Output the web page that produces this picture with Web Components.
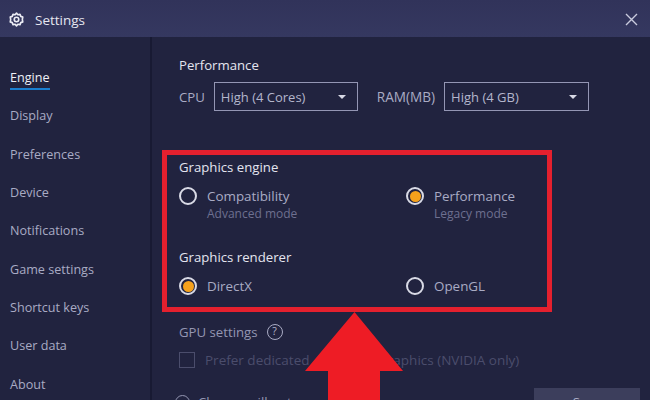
<!DOCTYPE html>
<html><head><meta charset="utf-8">
<style>
html,body{margin:0;padding:0;background:#21233f;overflow:hidden}
body{width:650px;height:400px;font-family:"Open Sans","Noto Sans",sans-serif}
</style></head><body>
<settings-window></settings-window>
<script>
const FONT='"Open Sans","Noto Sans",sans-serif';
class TitleBar extends HTMLElement{constructor(){super();this.attachShadow({mode:'open'}).innerHTML=`<style>
:host{display:flex;align-items:center;height:37px;box-sizing:border-box;padding:2px 12px 0 9px;background:linear-gradient(#31335a,#353860);color:#e6e7f0;font-size:13.5px}
svg{display:block}
.t{margin-left:11px;flex:1}
</style>
<svg width="15" height="15" viewBox="0 0 24 24" fill="none" stroke="#eceDf5" stroke-width="2.6" stroke-linejoin="round"><path d="M12 1.8l2.2 2.6 3.4-.6 1.2 3.2 3.2 1.2-.6 3.4 0 .8.6 3.4-3.2 1.2-1.2 3.2-3.4-.6L12 22.2l-2.2-2.6-3.4.6-1.2-3.2-3.2-1.2.6-3.4 0-.8-.6-3.4 3.2-1.2 1.2-3.2 3.4.6z"/><circle cx="12" cy="12" r="3.6"/></svg>
<span class="t">Settings</span>
<svg width="13" height="13" viewBox="0 0 13 13" stroke="#c9cbdd" stroke-width="1.4"><path d="M1 1l11 11M12 1L1 12"/></svg>`}}
customElements.define('title-bar',TitleBar);

class NavItem extends HTMLElement{constructor(){super();this.attachShadow({mode:'open'}).innerHTML=`<style>
:host{display:block;height:38.35px;font-size:12.6px;color:#a9abc4;line-height:18px}
:host([active]){color:#eeeff6}
span{display:inline-block;height:21px;box-sizing:border-box}
:host([active]) span{border-bottom:2px solid #1a7fd0}
</style><span><slot></slot></span>`}}
customElements.define('nav-item',NavItem);

class SideNav extends HTMLElement{constructor(){super();this.attachShadow({mode:'open'}).innerHTML=`<style>
:host{display:block;width:152px;flex:none;box-sizing:border-box;padding:32px 0 0 10px;border-right:2px solid #181a33;background:#21233f}
</style><slot></slot>`}}
customElements.define('side-nav',SideNav);

class SelectBox extends HTMLElement{constructor(){super();this.attachShadow({mode:'open'}).innerHTML=`<style>
:host{display:flex;align-items:center;height:29px;box-sizing:border-box;border:1px solid #9496b4;padding:0 11px 0 6px;color:#b4b6cc;font-size:13px}
span{flex:1}
i{border:4px solid transparent;border-top:4px solid #d8d9e6;border-bottom:0;display:block}
</style><span><slot></slot></span><i></i>`}}
customElements.define('select-box',SelectBox);

class RadioOption extends HTMLElement{constructor(){super();this.attachShadow({mode:'open'}).innerHTML=`<style>
:host{display:grid;grid-template-columns:18px 1fr;column-gap:10px;align-items:center;color:#a9abc4;font-size:13.4px;line-height:18px}
.r{width:18px;height:18px;box-sizing:border-box;border:2px solid #d9dae6;border-radius:50%;display:flex;align-items:center;justify-content:center}
:host([checked]) .r::after{content:"";width:11px;height:11px;border-radius:50%;background:#f5a11c}
.s{grid-column:2;font-size:12px;color:#6e7090;line-height:16px;margin-top:1px}
.s:empty{display:none}
</style><div class="r"></div><div><slot></slot></div><div class="s"></div>`;}
connectedCallback(){this.shadowRoot.querySelector('.s').textContent=this.getAttribute('sub')||''}}
customElements.define('radio-option',RadioOption);

class SettingsPane extends HTMLElement{constructor(){super();this.attachShadow({mode:'open'}).innerHTML=`<style>
:host{display:block;flex:1;position:relative;padding:19px 0 0 27px;font-size:13.2px;color:#a9abc4;overflow:hidden}
.h{color:#e4e5ef;line-height:18px;height:18px}
.row{display:flex;align-items:center;margin-top:8px;height:29px}
.l1{margin-right:9px}
.l2{margin:0 9px 0 19px;font-size:13.6px}
.cpu{width:144px}.ram{width:145px}
.g{display:grid;grid-template-columns:227px 180px}
.gfx{margin-top:47px}
.gfx .h{margin-bottom:11px}
.r2{margin-top:26px}
.gpu{margin-top:28px;display:flex;align-items:center;height:18px;color:#9496b2}
.q{width:16px;height:16px;box-sizing:border-box;border:1.5px solid #a9abc4;border-radius:50%;margin-left:9px;font-size:10.5px;line-height:13px;text-align:center;color:#b4b6cc}
.chk{display:flex;align-items:center;margin-top:10px;color:#4b4d6c;height:18px;font-size:13.5px;white-space:pre}
.chk i{width:16px;height:16px;box-sizing:border-box;border:1.5px solid #4b4d6c;margin:0 10px 0 0;display:block}
.chk b{font-weight:400;margin-left:71px}
.last{display:flex;align-items:center;margin:24px 0 0 -4px;color:#9496b2;height:18px}
.last i{width:15px;height:15px;box-sizing:border-box;border:1.5px solid #9496b2;border-radius:50%;margin-right:8px}
.save{position:absolute;left:382px;top:351px;width:106px;height:34px;background:#3c3e5c;color:#a9abc4;text-align:center;line-height:28px}
.box{position:absolute;left:10px;top:113px;width:390px;height:162px;box-sizing:border-box;border:5.5px solid #e4202e}
.arrow{position:absolute;left:153px;top:275px;display:block}
</style>
<div class="h">Performance</div>
<div class="row"><span class="l1">CPU</span><select-box class="cpu">High (4 Cores)</select-box><span class="l2">RAM(MB)</span><select-box class="ram">High (4 GB)</select-box></div>
<div class="gfx">
<div class="h">Graphics engine</div>
<div class="g"><radio-option sub="Advanced mode">Compatibility</radio-option><radio-option checked sub="Legacy mode">Performance</radio-option></div>
<div class="r2"><div class="h">Graphics renderer</div>
<div class="g"><radio-option checked>DirectX</radio-option><radio-option>OpenGL</radio-option></div></div>
</div>
<div class="gpu">GPU settings<span class="q">?</span></div>
<div class="chk"><i></i><span>Prefer dedicated</span><b>graphics (NVIDIA only)</b></div>
<div class="last"><i></i>Choose will not</div>
<div class="save">Save</div>
<div class="box"></div>
<svg class="arrow" width="99" height="90" viewBox="0 0 99 90"><path fill="#ee1c25" d="M49.5 0L98 59H75V90H23V59H0z"/></svg>`}}
customElements.define('settings-pane',SettingsPane);

class SettingsWindow extends HTMLElement{constructor(){super();this.attachShadow({mode:'open'}).innerHTML=`<style>
:host{display:flex;flex-direction:column;width:650px;height:400px;background:#21233f;overflow:hidden;font-family:${FONT}}
.b{display:flex;flex:1;min-height:0}
</style><title-bar></title-bar><div class="b"><side-nav>
<nav-item active>Engine</nav-item><nav-item>Display</nav-item><nav-item>Preferences</nav-item><nav-item>Device</nav-item><nav-item>Notifications</nav-item><nav-item>Game settings</nav-item><nav-item>Shortcut keys</nav-item><nav-item>User data</nav-item><nav-item>About</nav-item>
</side-nav><settings-pane></settings-pane></div>`}}
customElements.define('settings-window',SettingsWindow);
</script></body></html>
